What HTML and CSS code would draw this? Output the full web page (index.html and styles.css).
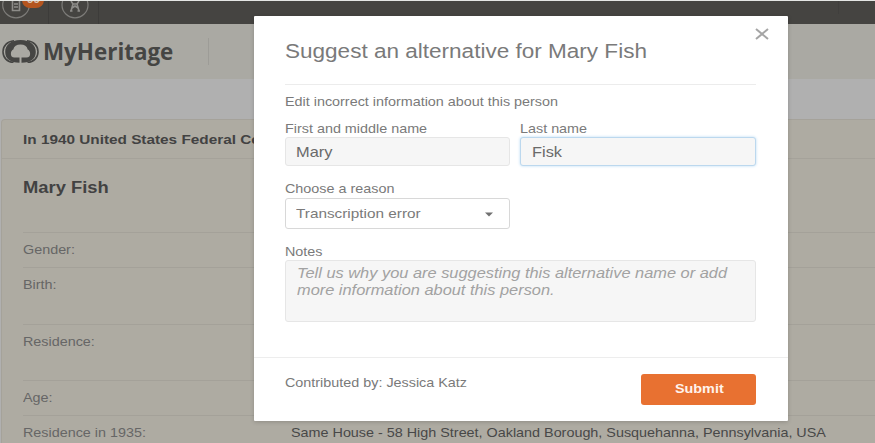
FILE: index.html
```html
<!DOCTYPE html>
<html lang="en">
<head>
<meta charset="utf-8">
<title>MyHeritage</title>
<link rel="stylesheet" href="styles.css">
</head>
<body>
<div class="page">
  <nav class="topbar">
    <div class="tool tool-first">
      <svg class="tool-icon" width="30" height="24" viewBox="0 0 30 24"><ellipse cx="16" cy="4" rx="13.300" ry="12.800"/><path class="heavy" d="M12.500 0V9.500H19.500V0M14 3H18M14 6H18"/></svg>
      <span class="badge"><span class="wide">99</span></span>
    </div>
    <div class="tool">
      <svg class="tool-icon" width="30" height="24" viewBox="0 0 30 24"><ellipse cx="15" cy="4" rx="13" ry="12.800"/><path class="heavy" d="M11 0L13 3H17L19 0M13 3L11 10M17 3L19 10M12 7L15 5L18 7M10 10H12.500M17.500 10H20"/></svg>
    </div>
    <div class="topbar-end"></div>
  </nav>
  <header class="brandbar">
    <svg class="logo" width="38" height="24" viewBox="0 0 38 24"><path class="ring" d="M12 .8C5 1.500 1 6 1 11.800S5 22 11.500 22.300M25 .8C32 1.500 36 6 36 11.800S32 22 25.500 22.300"/><path class="solid" d="M18.500 0C8.500 0 3.200 5 3.200 12C3.200 18.500 8 22.800 17.500 22.800V17.600H12.500C10 17.600 8.600 15.800 8.900 13.500C9 11.500 10 10 11.300 9.500C12 6.500 14.500 4.600 18.500 4.600S25 6.500 25.700 9.500C27 10 28 11.500 28.100 13.500C28.400 15.800 27 17.600 24.500 17.600H19.500V22.800C29 22.800 33.800 18.500 33.800 12C33.800 5 28.500 0 18.500 0Z"/></svg>
    <span class="brand">MyHeritage</span>
    <span class="brand-rule"></span>
  </header>
  <main class="record">
    <div class="record-head"><span class="wide">In 1940 United States Federal Census</span></div>
    <h1 class="person"><span class="wide">Mary Fish</span></h1>
    <dl class="facts">
      <div class="fact"><dt><span class="wide">Gender:</span></dt></div>
      <div class="fact tall"><dt><span class="wide">Birth:</span></dt></div>
      <div class="fact tall"><dt><span class="wide">Residence:</span></dt></div>
      <div class="fact"><dt><span class="wide">Age:</span></dt></div>
      <div class="fact"><dt><span class="wide">Residence in 1935:</span></dt><dd><span class="wide">Same House - 58 High Street, Oakland Borough, Susquehanna, Pennsylvania, USA</span></dd></div>
    </dl>
  </main>
</div>
<section class="modal" role="dialog">
  <svg class="close" width="14" height="12" viewBox="0 0 14 12"><path d="M1 1L13 11M13 1L1 11"/></svg>
  <div class="modal-body">
    <h2 class="title"><span class="wide">Suggest an alternative for Mary Fish</span></h2>
    <p class="intro"><span class="wide">Edit incorrect information about this person</span></p>
    <div class="names">
      <div class="field"><div class="label"><span class="wide">First and middle name</span></div><div class="input"><span class="wide">Mary</span></div></div>
      <div class="field"><div class="label"><span class="wide">Last name</span></div><div class="input focused"><span class="wide">Fisk</span></div></div>
    </div>
    <div class="label reason-label"><span class="wide">Choose a reason</span></div>
    <div class="select"><span class="wide">Transcription error</span><svg width="8" height="5" viewBox="0 0 8 5"><path d="M0 .5H8L4 4.500Z"/></svg></div>
    <div class="label notes-label"><span class="wide">Notes</span></div>
    <div class="notes"><span class="wide">Tell us why you are suggesting this alternative name or add<br>more information about this person.</span></div>
  </div>
  <footer class="modal-foot">
    <span class="contrib"><span class="wide">Contributed by: Jessica Katz</span></span>
    <div class="submit"><span class="wide">Submit</span></div>
  </footer>
</section>
</body>
</html>
```
FILE: styles.css
```css
* { box-sizing: border-box; }
body, h1, h2, p, dl, dd { margin: 0; }
body {
  height: 443px;
  overflow: hidden;
  background: #b0b0b0;
  font: 12.36px "Liberation Sans", Arial, sans-serif;
  color: #7a7a7a;
}
.page { height: 443px; overflow: hidden; border-top: 1px solid #e4e6e4; }

/* Letterforms are set slightly expanded */
.wide {
  display: inline-block;
  transform: scaleX(1.162);
  transform-origin: 0 50%;
  white-space: nowrap;
}

.topbar { display: flex; height: 23px; background: #454441; }
.tool { position: relative; width: 50px; border-right: 1px solid #3d3c3a; padding-left: 11px; }
.tool-first { padding-left: 0; width: 49px; }
.tool-icon { display: block; fill: none; stroke: #7d7c79; stroke-width: 1.2; }
.tool-icon .heavy { stroke: #8d8c89; stroke-width: 1.6; }
.badge {
  position: absolute;
  left: 22px;
  top: -9px;
  width: 22px;
  height: 16px;
  border-radius: 8px;
  background: #b4551f;
  color: #d8c5b8;
  font-size: 10px;
  font-weight: bold;
  line-height: 16px;
  padding-left: 5px;
}
.topbar-end { margin-left: auto; width: 37px; height: 13px; border-left: 1px solid #403f3d; }

.brandbar { display: flex; height: 55px; background: #aaa9a3; padding: 16px 0 0 2px; }
.logo { flex: none; fill: #454543; }
.logo .ring { fill: none; stroke: #454543; stroke-width: 1.6; }
.brand {
  width: 165px;
  margin: -2px 0 0 3px;
  font: bold 22.4px/28px "Open Sans", sans-serif;
  color: #454543;
}
.brand-rule { width: 1px; height: 27px; background: #9d9c97; margin-top: -2px; }

.record {
  margin: 40px 0 0 1px;
  height: 330px;
  border: 1px solid #a5a29a;
  border-right: 0;
  border-radius: 4px 0 0 0;
  background: #aeaba2;
}
.record-head {
  height: 39px;
  padding-left: 21px;
  border-bottom: 1px solid #a5a29a;
  font-size: 13.2px;
  font-weight: bold;
  line-height: 39px;
  color: #424242;
}
.person { height: 73px; padding-left: 21px; font-size: 15.8px; line-height: 57px; color: #424242; }
.facts { margin-left: 21px; }
.fact { display: flex; height: 35px; border-top: 1px solid #a4a199; line-height: 35px; }
.fact.tall { height: 56.5px; }
dt { width: 268px; color: #666; }
dd { color: #484848; }

.modal {
  position: absolute;
  left: 254px;
  top: 16px;
  width: 534px;
  height: 405px;
  background: #fff;
  border-radius: 1px;
  box-shadow: 0 1px 4px rgba(0, 0, 0, .18);
}
.close { position: absolute; right: 19px; top: 12px; fill: none; stroke: #a5a5a5; stroke-width: 2; }
.modal-body { height: 341px; padding: 0 32px 0 31px; }
.title {
  height: 69px;
  padding-top: 22px;
  border-bottom: 1px solid #ececec;
  font-size: 19.4px;
  font-weight: normal;
  line-height: 26px;
}
.intro { margin-top: 8px; height: 17px; line-height: 19px; }
.names { display: grid; grid-template-columns: 225px 236px; gap: 10px; margin-top: 10px; }
.label { height: 17px; line-height: 19px; }
.input {
  height: 29px;
  border: 1px solid #e6e6e6;
  border-radius: 3px;
  background: #f6f6f6;
  padding-left: 10px;
  font-size: 14.1px;
  line-height: 28px;
  color: #6a6a6a;
}
.focused { padding-left: 11px; border-color: #bcd8ee; box-shadow: 0 0 3px #b8daf3; }
.reason-label { margin-top: 14px; height: 18px; }
.select {
  display: flex;
  justify-content: space-between;
  align-items: center;
  width: 225px;
  height: 31px;
  border: 1px solid #d8d8d8;
  border-radius: 3px;
  padding: 0 16px 0 10px;
  font-size: 13.2px;
}
.select svg { fill: #707070; margin-top: 2px; }
.notes-label { margin-top: 13px; height: 18px; line-height: 20px; }
.notes {
  height: 62px;
  padding: 4px 0 0 10.5px;
  border: 1px solid #e6e6e6;
  border-radius: 3px;
  background: #f6f6f6;
  font-size: 14.1px;
  font-style: italic;
  line-height: 17px;
  color: #a2a2a2;
}
.modal-foot {
  display: flex;
  justify-content: space-between;
  height: 64px;
  padding: 16px 32px 0 31px;
  border-top: 1px solid #ededed;
}
.contrib { line-height: 19px; }
.submit {
  width: 115px;
  height: 31px;
  border-radius: 3px;
  background: #e87131;
  color: #fff3ec;
  font-weight: bold;
  line-height: 30px;
  padding-left: 34px;
}
```
